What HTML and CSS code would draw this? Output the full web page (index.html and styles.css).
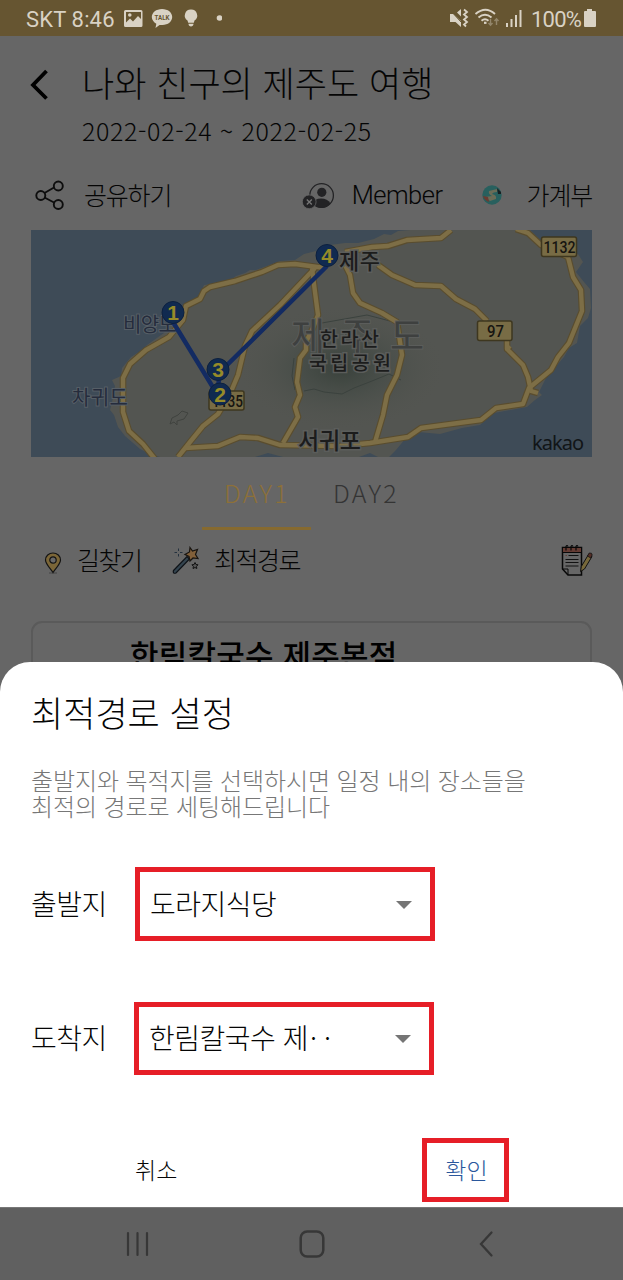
FILE: index.html
```html
<!DOCTYPE html>
<html lang="ko">
<head>
<meta charset="utf-8">
<title>나와 친구의 제주도 여행</title>
<link rel="stylesheet" href="styles.css">
</head>
<body>
<div class="phone">
  <div class="status">
    <span class="carrier">SKT 8:46</span>
    <svg class="status-icons" width="100" height="24" viewBox="122 6 100 24">
      <path fill="#d9d2c4" fill-rule="evenodd" d="M125.500 10h15.500q1.500 0 1.500 1.500v14q0 1.500-1.500 1.500h-15.500q-1.500 0-1.500-1.500v-14q0-1.500 1.500-1.500zM126 12v10.500l4-4 3 3 5-5.500 3 3v-7zM128 15a1.800 1.800 0 1 0 3.600 0a1.800 1.800 0 1 0-3.600 0"/>
      <path fill="#d9d2c4" d="M162 9c6 0 10.200 3.600 10.200 8s-4.200 8-9.700 8q-2 0-3 0l-4 3 .8-4.300c-2.600-1.500-4.500-3.800-4.500-6.700 0-4.400 4.400-8 10.200-8z"/>
      <text class="talk" x="154.500" y="19.800" textLength="15" lengthAdjust="spacingAndGlyphs">TALK</text>
      <path fill="#d9d2c4" d="M191 9.500a6 6 0 0 1 3.500 11l-.7 2.300h-5.600l-.7-2.300a6 6 0 0 1 3.500-11zM188.500 23.800h5c0 3.700-5 3.700-5 0z"/>
      <circle cx="219.500" cy="18" r="2.800" fill="#d9d2c4"/>
    </svg>
    <svg class="status-signal" width="76" height="24" viewBox="448 6 76 24">
      <g fill="#d9d2c4">
        <path d="M450 14h3.500l7.500 7v6l-5.500-5h-5.500zM457 12.500l4-3.500v7.500z"/>
        <path d="M449.500 9.500l12 13" stroke="#665531" stroke-width="1"/>
        <path d="M464 9.500l3 2.500-3 2.500 3 2.500-3 2.500 3 2.500-3 2.500 2 2" fill="none" stroke="#d9d2c4" stroke-width="1.800"/>
      </g>
      <g fill="none" stroke="#d9d2c4" stroke-width="1.900">
        <path d="M475.500 14q10-8.500 19.500 0M478.500 17.500q6.500-5.500 13 0M481.500 20.700q3.500-3 7 0"/>
        <path d="M484 22.800h2.500" stroke-width="2.200"/>
      </g>
      <path d="M490.500 19v6M488.500 23l2 2.300 2-2.300M496.500 25v-6M494.500 21l2-2.300 2 2.300" fill="none" stroke="#93866b" stroke-width="1.400"/>
      <path d="M507 23v4M511.500 19v8M516 15v12M520.500 10v17" stroke="#d9d2c4" stroke-width="2"/>
    </svg>
    <span class="percent">100%</span>
    <svg width="14" height="20" viewBox="0 0 14 20"><path fill="#d9d2c4" d="M4 1h5v2h3q1 0 1 1v14q0 1-1 1h-10q-1 0-1-1v-14q0-1 1-1h2z"/></svg>
  </div>

  <div class="page">
    <div class="header">
      <svg class="back" width="20" height="32" viewBox="0 0 20 32"><path d="M17.500 2L4 16l13.500 13.500" fill="none" stroke="#000" stroke-width="3.800"/></svg>
      <div class="trip">
        <h1 class="trip-title">나와 친구의 제주도 여행</h1>
        <div class="trip-date">2022-02-24 ~ 2022-02-25</div>
      </div>
    </div>

    <div class="actions">
      <svg width="30" height="30" viewBox="0 0 30 30"><g fill="none" stroke="#0d0d0d" stroke-width="1.900"><path d="M9.500 13l9.500-5.500M9.500 17.500l9.500 5"/><circle cx="5.800" cy="15.500" r="4.500"/><circle cx="23.300" cy="6" r="4.500"/><circle cx="23.300" cy="24.500" r="4.500"/></g></svg>
      <span class="action-share">공유하기</span>
      <svg width="34" height="30" viewBox="301 180 34 30">
        <circle cx="321.600" cy="195.500" r="11.800" fill="none" stroke="#232325" stroke-width="1.300"/>
        <circle cx="321.800" cy="192.300" r="4.600" fill="#232325"/>
        <path d="M312.500 203.500q2-5 8.500-5t9.500 5q-3.500 4.500-9 4.500t-9-4.500z" fill="#232325"/>
        <circle cx="309.200" cy="201.800" r="6.900" fill="#232325" stroke="#666" stroke-width=".8"/>
        <path d="M306.800 199.500l5 5M311.800 199.500l-5 5" stroke="#777" stroke-width="1.300"/>
      </svg>
      <span class="action-member">Member</span>
      <svg class="book" width="20" height="20" viewBox="0 0 20 20"><circle cx="10" cy="10" r="9.700" fill="#28605e"/><path d="M7 6l8-2v3q-4 0-5 2 5 1 4 5l-6 2-5-4 7-1q-4-2-3-5z" fill="#6b6c57"/><path d="M1 11l5 1 1 5q-5-2-6-6z" fill="#6b3b31"/><path d="M15 3l4 4v2h-3z" fill="#182023"/></svg>
      <span class="action-book">가계부</span>
    </div>

    <svg class="map" width="561" height="227" viewBox="31 230 561 227">
      <defs>
        <radialGradient id="hill"><stop offset="0" stop-color="#39413b"/><stop offset=".45" stop-color="#474d48" stop-opacity=".75"/><stop offset="1" stop-color="#53554f" stop-opacity="0"/></radialGradient>
        <g id="roads" fill="none" stroke-linejoin="round">
          <path d="M155 459L143 444 129 431 123 412 123 378 130 364 146 350 169 337 183 320 186 306 200 299 204 291 210 287 235 281 262 272 278 265 295 264 325 268"/>
          <path d="M315 268L280 305 252 331 245 346 238 375 230 394 218 414 203 426 190 442 178 457"/>
          <path d="M312 268L315 292 318 315 313 328 306 342 306 350 300 358 297 382 300 395 295 407 298 417 283 443"/>
          <path d="M345 265L350 275 353 293 360 303 382 313 397 322 402 355 397 375 387 395 383 415 375 442"/>
          <path d="M378 265L392 275 415 285 441 286 456 299 475 309 487 321M507 340L507 349 510 346M507 349L523 365 528 377 531 391 538 393"/>
          <path d="M345 252L372 247 388 246 407 240 441 238 451 230M516 229L528 233 541 245 568 257 573 277 581 290 582 311 569 343 558 357 551 370 529 388 523 404 496 408 481 420 421 428 408 437 370 443 340 446 280 445 258 438 240 437 218 446 185 448"/>
        </g>
      </defs>
      <rect x="31" y="230" width="561" height="227" fill="#3e4b57"/>
      <path fill="#535551" d="M160 457L150 454 140 449 125 436 118 427 114 415 110 410 113 398 115 386 112 380 121 376 122 368 131 357 142 350 147 345 164 333 176 312 198 298 204 285 212 284 232 279 236 276 245 273 250 270 256 270 267 266 280 261 295 260 304 254 316 251 330 245 345 243 358 243 374 239 384 234 391 235 398 231 410 230 530 230 540 240 552 247 578 254 583 262 576 272 584 282 590 289 591 308 588 318 580 326 577 343 569 348 564 357 551 372 545 380 539 392 542 395 535 400 527 407 516 409 494 413 480 425 462 428 440 434 418 432 406 438 396 450 389 457 378 457 370 453 359 457 283 457 268 453 255 457z"/>
      <ellipse cx="341" cy="368" rx="105" ry="62" fill="url(#hill)"/>
      <path d="M294 358l-2 18 3 14M304 391l10-2 10 3 18 2 12-6 18-7 17-7 12 6M322 323l45-8 23 6" fill="none" stroke="#3b423e" stroke-width="1"/>
      <use class="road-edge" href="#roads"/>
      <use class="road-fill" href="#roads"/>
      <path d="M170 424l2-6 6-3 4-4 6 2-4 6-7 2 0 4-3-3z" fill="none" stroke="#40433f"/>
      <g class="shields">
        <rect x="541.500" y="237" width="35" height="19.500" rx="2"/><rect x="477.500" y="321" width="34.500" height="19.500" rx="2"/><rect x="209" y="391" width="35" height="19" rx="2"/>
      </g>
      <g class="road-no"><text x="543.500" y="252.500" textLength="32" lengthAdjust="spacingAndGlyphs">1132</text><text x="487" y="336.500" textLength="17" lengthAdjust="spacingAndGlyphs">97</text><text x="212" y="406.500" textLength="31" lengthAdjust="spacingAndGlyphs">1135</text></g>
      <text class="island" x="291" y="350" textLength="133">제주도</text>
      <g class="place">
        <text x="339" y="269" font-size="22" textLength="41">제주</text>
        <text x="320" y="345.500" font-size="19.500" textLength="59">한라산</text>
        <text x="309" y="369.500" font-size="19.500" textLength="82">국립공원</text>
        <text x="298" y="449" font-size="23" textLength="63">서귀포</text>
        <text class="isle" x="123" y="331.500" font-size="20" textLength="54">비양도</text>
        <text class="isle" x="72" y="405" font-size="20" textLength="56">차귀도</text>
      </g>
      <path d="M173 322L217 394 220 372 327 266" fill="none" stroke="#132b62" stroke-width="4.500"/>
      <g class="pins"><circle cx="173" cy="312.500" r="11"/><circle cx="218" cy="369.500" r="11"/><circle cx="220" cy="394" r="11"/><circle cx="327" cy="255.500" r="11"/></g>
      <g class="pin-no"><text x="173" y="320">1</text><text x="218" y="377">3</text><text x="220" y="401.500">2</text><text x="327" y="263">4</text></g>
      <text class="kakao" x="532" y="450" textLength="52">kakao</text>
    </svg>

    <div class="tabs"><div class="tab tab-on">DAY1</div><div class="tab">DAY2</div></div>

    <div class="tools">
      <svg class="pin-icon" width="18" height="22" viewBox="0 0 18 22"><path d="M5 21h8" stroke="#444"/><path d="M9 20.500C6.500 16.500 1.500 12 1.500 8a7.500 7 0 0 1 15 0c0 4-5 8.500-7.500 12.500z" fill="#7b6638" stroke="#141414" stroke-width="1.200"/><circle cx="9" cy="8" r="3.200" fill="#686868" stroke="#141414" stroke-width="1.200"/></svg>
      <span class="tool-route">길찾기</span>
      <svg width="28" height="28" viewBox="171 544 28 28"><path d="M173.500 568.500L187 554.500l2.500 2.500-13.500 14q-3.500 1-2.500-2.500z" fill="#34444f" stroke="#0e1217" stroke-width="1.200"/><path d="M190 545.500l2.500 3.500 5-1.500-2 5 2.500 4-5-.5-3 3-1-4.500-4-2 4.500-2.500z" fill="#82603a" stroke="#181410" stroke-width="1.200"/><path d="M178.500 546.500v2.500M178.500 552v2.500M174.500 550.500h2.500M180 550.500h2.500" stroke="#24313e" stroke-width="1"/><path d="M195 560.500l1 2 2 .3-1.500 1.500.3 2.200-1.800-1-2 1 .4-2.200-1.500-1.500 2.200-.3z" fill="#565656" stroke="#111" stroke-width="1"/></svg>
      <span class="tool-best">최적경로</span>
      <svg class="note" width="32" height="32" viewBox="561 544 32 32"><path d="M562.500 547.500h19v27.500h-13.500l-5.500-6z" fill="#666" stroke="#080808" stroke-width="1.500"/><path d="M563 548h18v4h-18z" fill="#653c34"/><path d="M562.500 552.500h19M562.500 569h5.500v6" fill="none" stroke="#080808" stroke-width="1"/><path d="M566 550.500v-4q1-2 2 0M571 550.500v-4q1-2 2 0M576 550.500v-4q1-2 2 0" fill="none" stroke="#080808" stroke-width="1.200"/><path d="M568.500 555.500h10M565.500 559.500h13M565.500 562.500h13M565.500 566h13" stroke="#111" stroke-width="1.100"/><path d="M565.500 555.500h1.500" stroke="#653c34"/><path d="M580.500 571.500l.8-5 7.200-12 3.500 2-7.500 12.500z" fill="#77683a" stroke="#111" stroke-width="1"/><path d="M587.500 556l1.700-3q3-.5 3 2l-1.500 3z" fill="#562f28" stroke="#111" stroke-width=".8"/></svg>
    </div>

    <div class="card">한림칼국수 제주본점</div>
  </div>

  <div class="sheet">
    <h2 class="sheet-title">최적경로 설정</h2>
    <p class="sheet-desc">출발지와 목적지를 선택하시면 일정 내의 장소들을<br>최적의 경로로 세팅해드립니다</p>
    <div class="field field-start"><span class="label">출발지</span><div class="select"><span class="value">도라지식당</span><i class="caret"></i></div></div>
    <div class="field field-end"><span class="label">도착지</span><div class="select"><span class="value">한림칼국수 제<span class="dots">··</span></span><i class="caret"></i></div></div>
    <div class="buttons"><span class="cancel">취소</span><span class="confirm">확인</span></div>
  </div>

  <div class="nav">
    <svg width="24" height="26" viewBox="0 0 24 26"><path d="M2 2v22M11.500 2v22M21 2v22" stroke="#373737" stroke-width="2.200" stroke-linecap="round"/></svg>
    <svg width="26" height="30" viewBox="0 0 26 30"><rect x="1.700" y="2.500" width="22.600" height="25" rx="6.500" fill="none" stroke="#373737" stroke-width="2.500"/></svg>
    <svg width="16" height="28" viewBox="0 0 16 28"><path d="M13.500 2.500L3 14l10.500 11.500" fill="none" stroke="#373737" stroke-width="2.300" stroke-linecap="round"/></svg>
  </div>
</div>
</body>
</html>
```
FILE: styles.css
```css
* { box-sizing: border-box; }
body { margin: 0; }
.phone {
  position: relative;
  display: flex;
  flex-direction: column;
  width: 623px;
  height: 1280px;
  overflow: hidden;
  background: #666;
  color: #050505;
  font-family: "Noto Sans CJK KR", sans-serif;
  font-weight: 300;
  white-space: nowrap;
}
svg { display: block; flex: none; }
h1, h2, p { margin: 0; font-weight: 300; }

.status {
  display: flex;
  align-items: center;
  flex: none;
  height: 36px;
  padding-left: 26px;
  background: #665531;
  color: #d9d2c4;
  font-family: Roboto, sans-serif;
  font-weight: 400;
  font-size: 22px;
}
.carrier { width: 96px; padding-top: 3px; letter-spacing: 0.15px; }
.status-signal { margin-left: 226px; }
.percent { width: 59px; padding: 3px 0 0 7px; letter-spacing: -0.8px; }
.talk { fill: #665531; font: 700 7px Roboto, sans-serif; }

.page { height: 1171px; flex: none; overflow: hidden; }
.header { display: flex; height: 124px; padding: 24px 0 0 29px; }
.back { margin-top: 9px; }
.trip { margin-left: 33px; }
.trip-title { height: 44px; line-height: 44px; font-size: 35px; }
.trip-date { height: 34px; margin-top: 9px; line-height: 34px; font-size: 25px; letter-spacing: 0.65px; }

.actions { display: flex; align-items: center; height: 70px; padding: 0 31px 0 35px; font-size: 25px; }
.action-share, .action-member, .action-book { line-height: 36px; padding-bottom: 3px; }
.action-share { width: 219px; margin-left: 19px; letter-spacing: -1.2px; }
.action-member { width: 111px; margin-left: 17px; padding-bottom: 1px; font-family: Roboto, sans-serif; font-size: 25.5px; letter-spacing: -0.5px; }
.book { margin-left: 20px; }
.action-book { margin-left: 25px; letter-spacing: -1.2px; }

.map { margin-left: 31px; }
.road-edge { stroke: #5a4d2e; stroke-width: 6.6px; }
.road-fill { stroke: #7d6e46; stroke-width: 4.4px; }
.shields rect { fill: #786c45; stroke: #3e371f; stroke-width: 1.5px; }
.road-no { fill: #161511; font: 500 17px Roboto, sans-serif; }
.island { font-size: 37px; font-weight: 400; fill: #3e403f; stroke: #5b5d5b; stroke-width: 2px; paint-order: stroke; }
.place text { fill: #1c1c1c; stroke: #5b5d5b; stroke-width: 3px; paint-order: stroke; font-weight: 500; }
.place .isle { fill: #252c3c; font-weight: 400; stroke: #565e66; stroke-width: 2px; }
.pins circle { fill: #102a50; stroke: #0c203f; stroke-width: 1px; }
.pin-no { fill: #968b29; font: 700 21px "Liberation Sans", sans-serif; text-anchor: middle; }
.kakao { fill: #111517; font: 400 20px "Noto Sans", sans-serif; }

.tabs { display: flex; justify-content: center; height: 73px; padding-right: 1px; }
.tab { width: 109px; padding-left: 1px; line-height: 71px; text-align: center; color: #343434; font-size: 25px; letter-spacing: 2.3px; }
.tab-on { color: #8d7038; border-bottom: 3px solid #866a30; }

.tools { display: flex; align-items: center; height: 60px; padding: 0 30px 0 44px; font-size: 25px; line-height: 36px; }
.pin-icon { margin-top: 5px; }
.tool-route, .tool-best { padding-bottom: 3px; letter-spacing: -1.5px; }
.tool-route { width: 94px; margin-left: 15px; }
.tool-best { margin-left: 15px; }
.note { margin-left: auto; }

.card {
  width: 561px;
  height: 160px;
  margin: 31px 0 0 31px;
  padding: 10px 0 0 97px;
  border: 2px solid #5a5a5a;
  border-radius: 11px;
  color: #000;
  font-size: 31px;
  font-weight: 500;
  line-height: 42px;
  letter-spacing: 0.2px;
}

.sheet {
  position: absolute;
  left: 0;
  top: 662px;
  width: 623px;
  height: 545px;
  padding: 28px 31px 0;
  border-radius: 30px 30px 0 0;
  background: #fff;
}
.sheet-title { height: 44px; line-height: 44px; font-size: 35px; }
.sheet-desc { height: 52px; margin-top: 33px; line-height: 26px; color: #777; font-size: 24px; letter-spacing: -0.1px; }
.field { display: flex; align-items: center; font-size: 28px; letter-spacing: -0.5px; }
.field-start { height: 74px; margin-top: 48px; }
.field-end { height: 73px; margin-top: 61px; }
.label { width: 104px; padding-bottom: 3px; }
.field-end .label { width: 103px; }
.select {
  display: flex;
  align-items: center;
  justify-content: space-between;
  width: 300px;
  height: 100%;
  padding: 0 18px 0 10px;
  border: 5px solid #e61e27;
}
.value { padding-bottom: 3px; }
.caret { margin-top: 1px; border: 8px solid transparent; border-top-color: #757575; border-bottom: 0; }
.dots { margin-left: 2px; letter-spacing: 7px; }
.buttons { display: flex; height: 64px; margin-top: 63px; padding-left: 104px; font-size: 23px; line-height: 62px; }
.cancel { width: 287px; }
.confirm { width: 87px; padding-left: 2px; border: 5px solid #e61e27; color: #2b579c; line-height: 52px; text-align: center; }

.nav { display: flex; align-items: center; flex: none; height: 73px; padding-left: 126px; background: #606060; border-top: 1px solid #777; }
.nav svg + svg { margin-left: 149px; }
.nav svg + svg + svg { margin-left: 153px; }
```
